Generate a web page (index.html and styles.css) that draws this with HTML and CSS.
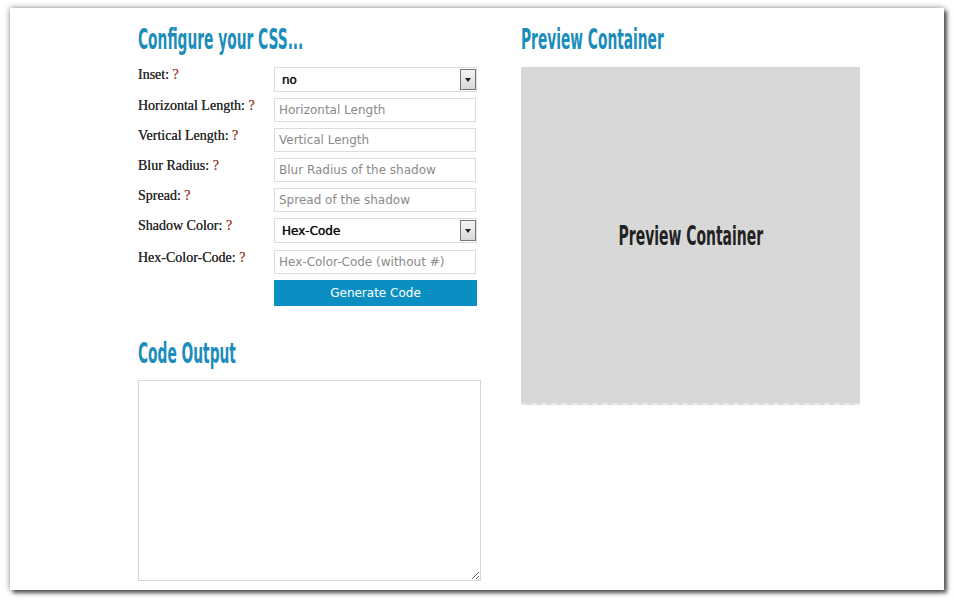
FILE: index.html
```html
<!DOCTYPE html>
<html lang="en">
<head>
    <meta charset="UTF-8">
    <meta name="viewport" content="width=device-width, initial-scale=1.0">
    <title>CSS Box Shadow Generator</title>
    <link rel="stylesheet" href="styles.css">
</head>
<body>

    <div class="frame">
        <div class="column left">
            <h2><span>Configure your CSS...</span></h2>
            <div class="row">
                <label>Inset: <span class="help">?</span></label>
                <div class="select-wrap">
                    <select id="inset">
                        <option>no</option>
                        <option>yes</option>
                    </select>
                    <span class="arrow"></span>
                </div>
            </div>
            <div class="row">
                <label>Horizontal Length: <span class="help">?</span></label>
                <input type="text" placeholder="Horizontal Length">
            </div>
            <div class="row">
                <label>Vertical Length: <span class="help">?</span></label>
                <input type="text" placeholder="Vertical Length">
            </div>
            <div class="row">
                <label>Blur Radius: <span class="help">?</span></label>
                <input type="text" placeholder="Blur Radius of the shadow">
            </div>
            <div class="row">
                <label>Spread: <span class="help">?</span></label>
                <input type="text" placeholder="Spread of the shadow">
            </div>
            <div class="row">
                <label>Shadow Color: <span class="help">?</span></label>
                <div class="select-wrap">
                    <select id="color-type">
                        <option>Hex-Code</option>
                        <option>RGBA</option>
                    </select>
                    <span class="arrow"></span>
                </div>
            </div>
            <div class="row hex">
                <label>Hex-Color-Code: <span class="help">?</span></label>
                <input type="text" placeholder="Hex-Color-Code (without #)">
            </div>
            <div class="row">
                <span class="spacer"></span>
                <button class="generate">Generate Code</button>
            </div>

            <h2 class="output-title"><span>Code Output</span></h2>
            <textarea class="output"></textarea>
        </div>

        <div class="column right">
            <h2><span>Preview Container</span></h2>
            <div class="preview"><span>Preview Container</span></div>
        </div>
    </div>

</body>
</html>
```

FILE: styles.css
```css
body {
    margin: 0;
    background: #fff;
}

.frame {
    margin: 8px 10px 10px 10px;
    height: 582px;
    box-sizing: border-box;
    background: #fff;
    box-shadow: 0 0 6px rgba(0, 0, 0, 0.45), 3px 3px 4px rgba(0, 0, 0, 0.6);
    display: flex;
    gap: 40px;
    padding: 16px 0 0 128px;
}

.column h2 {
    margin: 0 0 11px 0;
    font-family: "DejaVu Sans Condensed", "DejaVu Sans", sans-serif;
    font-stretch: condensed;
    font-weight: bold;
    font-size: 28px;
    line-height: 32px;
    color: #1a8dbb;
    white-space: nowrap;
}

.column h2 span,
.preview span {
    display: inline-block;
    transform: scaleX(0.547);
    transform-origin: left center;
}

.left {
    width: 343px;
}

.right {
    width: 339px;
}

.row {
    display: flex;
    margin-bottom: 6px;
}

.row.hex {
    margin-top: 7px;
}

.row label,
.spacer {
    width: 136px;
    flex-shrink: 0;
}

.row label {
    font-family: "Liberation Serif", serif;
    font-size: 14px;
    line-height: 16px;
    color: #2b2b2b;
    text-shadow: 0 0 0.6px #2b2b2b;
}

.help {
    color: #cc4636;
}

.row input {
    width: 202px;
    height: 24px;
    box-sizing: border-box;
    border: 1px solid #dcdcdc;
    padding: 0 4px;
    font-family: "DejaVu Sans", Verdana, sans-serif;
    font-size: 12px;
    color: #555;
}

.row input::placeholder {
    color: #8a8a8a;
}

.select-wrap {
    position: relative;
    width: 203px;
    height: 25px;
}

.select-wrap select {
    appearance: none;
    width: 100%;
    height: 100%;
    box-sizing: border-box;
    border: 1px solid #dcdcdc;
    background: #fff;
    padding: 0 7px;
    font-family: "DejaVu Sans", Verdana, sans-serif;
    font-size: 12px;
    color: #111;
    text-shadow: 0 0 0.7px #111;
}

.select-wrap .arrow {
    position: absolute;
    right: 1px;
    top: 2px;
    width: 14px;
    height: 19px;
    border: 1px solid #777;
    background: linear-gradient(#f4f4f4, #d8d8d8);
    pointer-events: none;
}

.select-wrap .arrow::after {
    content: "";
    position: absolute;
    left: 4px;
    top: 8px;
    border-left: 3px solid transparent;
    border-right: 3px solid transparent;
    border-top: 4px solid #222;
}

.generate {
    width: 203px;
    height: 26px;
    border: none;
    background: #0b8fc3;
    color: #fff;
    font-family: "DejaVu Sans", Verdana, sans-serif;
    font-size: 12px;
    cursor: pointer;
}

.column .output-title {
    margin: 32px 0 10px 0;
}

.output {
    display: block;
    width: 343px;
    height: 201px;
    box-sizing: border-box;
    border: 1px solid #d6d6d6;
    margin: 0;
}

.preview {
    width: 339px;
    height: 338px;
    box-sizing: border-box;
    background: #d8d8d8;
    border-bottom: 2px dashed #e8e8e8;
    display: flex;
    align-items: center;
    justify-content: center;
    font-family: "DejaVu Sans Condensed", "DejaVu Sans", sans-serif;
    font-stretch: condensed;
    font-weight: bold;
    font-size: 27px;
    color: #222;
}

.preview span {
    transform: scaleX(0.574);
    transform-origin: center;
}
```
